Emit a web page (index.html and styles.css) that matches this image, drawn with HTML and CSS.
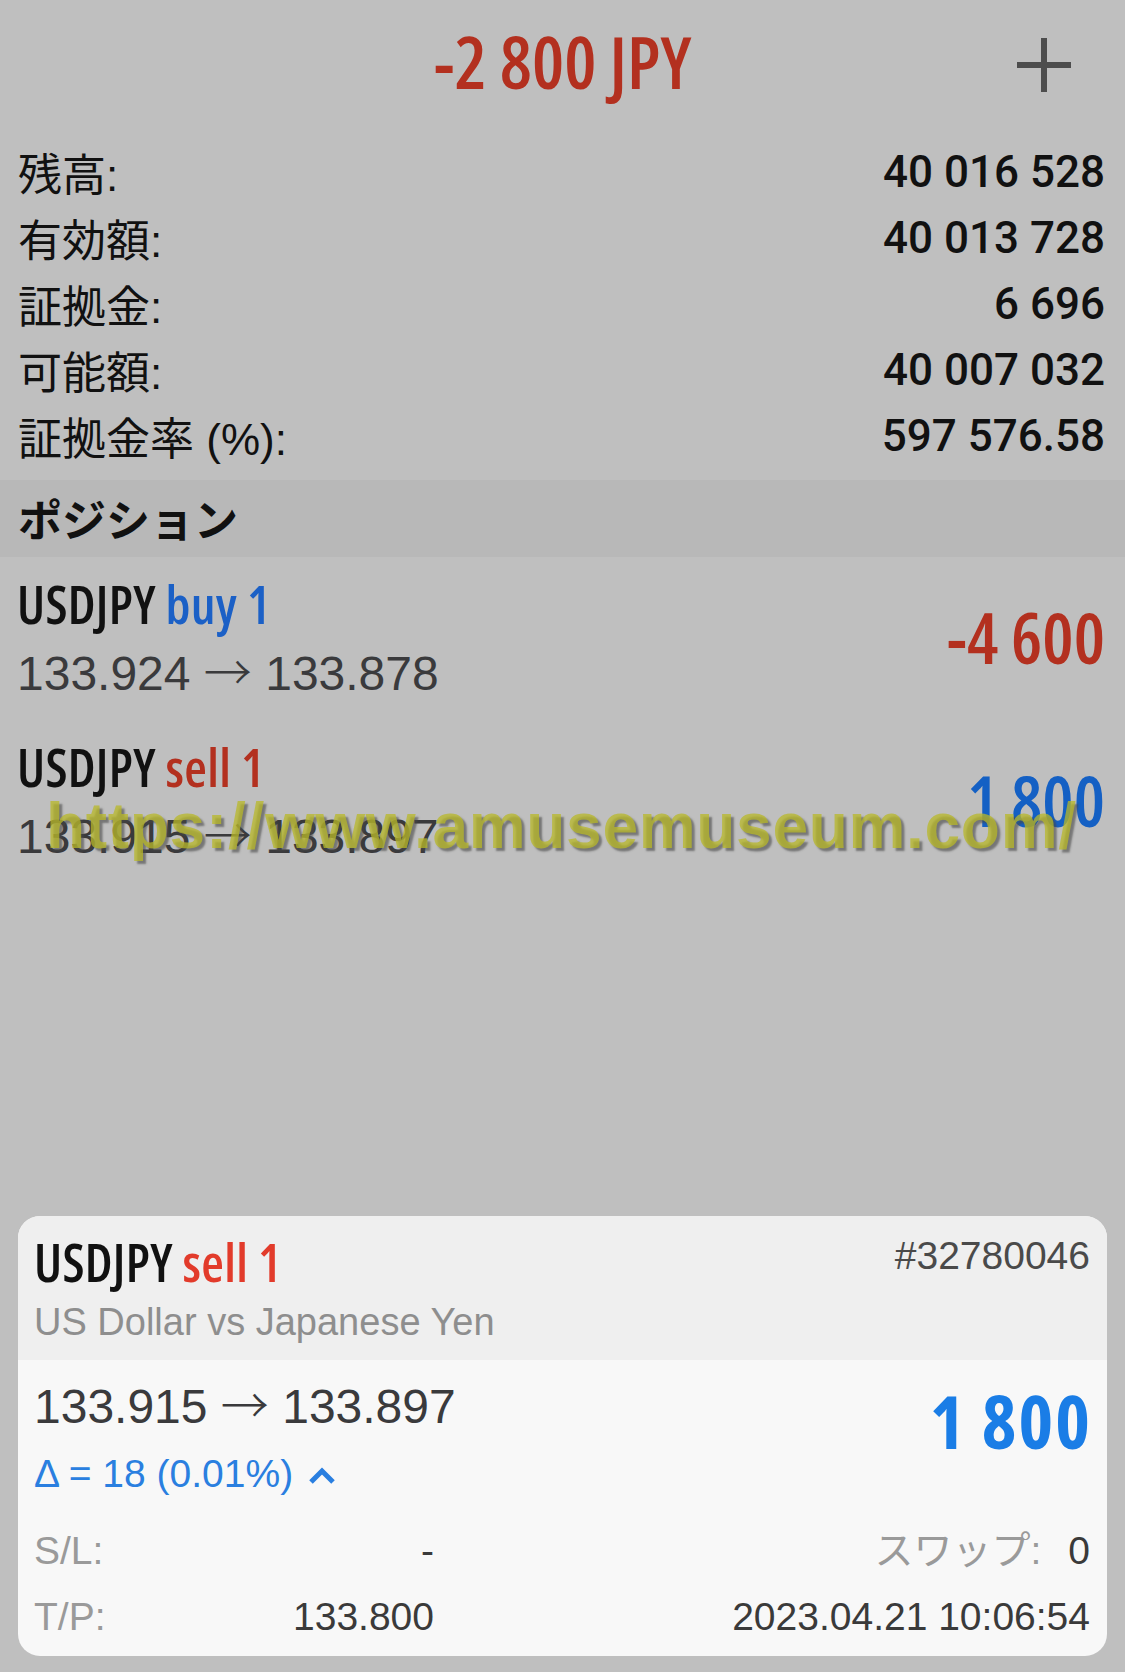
FILE: index.html
```html
<!DOCTYPE html>
<html>
<head>
<title>Trade</title>
<link rel="stylesheet" href="styles.css">
</head>
<body>

<div class="screen">
  <header class="topbar">
    <div class="total loss">-2 800 JPY</div>
    <button class="add-btn" aria-label="add">
      <svg width="54" height="54" viewBox="0 0 54 54">
        <line x1="27" y1="0" x2="27" y2="54" stroke="#4d4d4d" stroke-width="6"/>
        <line x1="0" y1="27" x2="54" y2="27" stroke="#4d4d4d" stroke-width="6"/>
      </svg>
    </button>
  </header>

  <!-- account summary -->
  <div class="summary">
    <div class="summary-row"><span>残高:</span><span class="num">40 016 528</span></div>
    <div class="summary-row"><span>有効額:</span><span class="num">40 013 728</span></div>
    <div class="summary-row"><span>証拠金:</span><span class="num">6 696</span></div>
    <div class="summary-row"><span>可能額:</span><span class="num">40 007 032</span></div>
    <div class="summary-row"><span>証拠金率 (%):</span><span class="num">597 576.58</span></div>
  </div>

  <div class="section-title">ポジション</div>

  <div class="positions">
    <div class="position">
      <div class="pos-info">
        <div class="pos-name">USDJPY <span class="buy">buy 1</span></div>
        <div class="pos-price">133.924 <span class="arrow">→</span> 133.878</div>
      </div>
      <div class="pos-profit loss">-4 600</div>
    </div>
    <div class="position">
      <div class="pos-info">
        <div class="pos-name">USDJPY <span class="sell">sell 1</span></div>
        <div class="pos-price">133.915 <span class="arrow">→</span> 133.897</div>
      </div>
      <div class="pos-profit gain">1 800</div>
    </div>
    <div class="watermark">https://www.amusemuseum.com/</div>
  </div>

  <!-- selected position details -->
  <div class="detail-card">
    <div class="detail-head">
      <div class="detail-title">
        <div class="pos-name">USDJPY <span class="sell-bright">sell 1</span></div>
        <div class="ticket">#32780046</div>
      </div>
      <div class="symbol-desc">US Dollar vs Japanese Yen</div>
    </div>
    <div class="detail-body">
      <div class="detail-main">
        <div>
          <div class="pos-price">133.915 <span class="arrow">→</span> 133.897</div>
          <div class="delta">Δ = 18 (0.01%)
            <svg class="chevron" width="28" height="18" viewBox="0 0 28 18">
              <polyline points="3,15 14,4 25,15" fill="none" stroke="#2a7fe0" stroke-width="5"/>
            </svg>
          </div>
        </div>
        <div class="detail-profit">1 800</div>
      </div>
      <div class="detail-grid">
        <div class="cell"><span class="k">S/L:</span><span class="v">-</span></div>
        <div class="cell right"><span class="k">スワップ:</span><span class="v">0</span></div>
        <div class="cell"><span class="k">T/P:</span><span class="v">133.800</span></div>
        <div class="cell right"><span class="v">2023.04.21 10:06:54</span></div>
      </div>
    </div>
  </div>
</div>

</body>
</html>
```

FILE: styles.css
```css
body {
  margin: 0;
  background-color: #bfbfbf;
  font-family: "Liberation Sans", "Noto Sans CJK JP", sans-serif;
  color: #141414;
}

.screen {
  display: flex;
  flex-direction: column;
  min-height: 1672px;
}

/* Top bar with the floating P/L */
.topbar {
  display: grid;
  grid-template-columns: 1fr auto 1fr;
  align-items: center;
  height: 130px;
  margin-bottom: 9px;
}

.total {
  grid-column: 2;
  margin-bottom: 8px;
  font-family: "Open Sans", sans-serif;
  font-stretch: 75%;
  font-weight: 600;
  font-size: 72px;
}

.add-btn {
  grid-column: 3;
  justify-self: end;
  margin-right: 54px;
  width: 54px;
  height: 54px;
  padding: 0;
  border: none;
  background: none;
}

.add-btn svg {
  display: block;
}

.loss {
  color: #b3301f;
}

.gain {
  color: #1460c4;
}

/* Account summary */
.summary {
  padding: 0 20px 0 18px;
  margin-bottom: 11px;
}

.summary-row {
  display: flex;
  justify-content: space-between;
  align-items: center;
  height: 66px;
  font-size: 44px;
  color: #111;
}

.summary-row .num {
  font-family: Roboto, "Liberation Sans", sans-serif;
  font-weight: 500;
}

.section-title {
  background-color: #b8b8b8;
  height: 77px;
  line-height: 77px;
  padding-left: 18px;
  font-family: "Noto Sans CJK JP", sans-serif;
  font-weight: bold;
  font-size: 44px;
  color: #111;
}

/* Position list */
.positions {
  position: relative;
}

.position {
  display: flex;
  justify-content: space-between;
  align-items: center;
  padding: 19px 20px 16px 17px;
}

.pos-name {
  font-family: "Open Sans", sans-serif;
  font-stretch: 75%;
  font-weight: 600;
  font-size: 52px;
  line-height: 56px;
  letter-spacing: 0.3px;
  color: #111;
}

.buy {
  color: #1b60c6;
}

.sell {
  color: #b3301f;
}

.sell-bright {
  color: #e23b2b;
}

.pos-price {
  margin-top: 12px;
  font-size: 48px;
  line-height: 60px;
  color: #3a3a3c;
}

.arrow {
  font-family: "Noto Sans CJK JP", sans-serif;
  font-weight: 300;
  line-height: 0;
}

.pos-profit {
  margin-bottom: 6px;
  font-family: "Open Sans", sans-serif;
  font-stretch: 75%;
  font-weight: 600;
  font-size: 70px;
}

.watermark {
  position: absolute;
  top: 237px;
  left: 46px;
  font-weight: bold;
  font-size: 64px;
  line-height: 64px;
  letter-spacing: 0.7px;
  color: rgba(184, 184, 40, 0.75);
  text-shadow: 3px 3px 2px rgba(70, 70, 70, 0.6);
  white-space: nowrap;
}

/* Detail card at the bottom */
.detail-card {
  margin: auto 18px 16px 18px;
  border-radius: 22px;
  overflow: hidden;
  background-color: #f8f8f8;
}

.detail-head {
  background-color: #efefef;
  padding: 18px 17px 14px 16px;
}

.detail-title {
  display: flex;
  justify-content: space-between;
  align-items: flex-start;
}

.ticket {
  font-size: 39px;
  line-height: 44px;
  color: #4a4a4a;
}

.symbol-desc {
  margin-top: 8px;
  font-size: 38px;
  line-height: 48px;
  color: #8e8e8e;
}

.detail-body {
  padding: 17px 17px 6px 16px;
}

.detail-body .pos-price {
  margin-top: 0;
}

.detail-main {
  display: flex;
  justify-content: space-between;
  align-items: flex-start;
}

.delta {
  margin-top: 12px;
  font-size: 39px;
  line-height: 50px;
  color: #2a7fe0;
}

.chevron {
  margin-left: 4px;
  vertical-align: 2px;
}

.detail-profit {
  margin-top: 7px;
  margin-right: -2px;
  font-family: "Open Sans", sans-serif;
  font-stretch: 87.5%;
  font-weight: bold;
  font-size: 74px;
  line-height: 74px;
  letter-spacing: 2px;
  color: #1a7de6;
}

.detail-grid {
  display: grid;
  grid-template-columns: 400px 1fr;
  margin-top: 19px;
}

.cell {
  display: flex;
  justify-content: space-between;
  height: 66px;
  line-height: 66px;
  font-size: 39px;
}

.cell.right {
  justify-content: flex-end;
  gap: 27px;
}

.k {
  color: #9a9a9a;
}

.v {
  color: #3a3a3a;
}
```
